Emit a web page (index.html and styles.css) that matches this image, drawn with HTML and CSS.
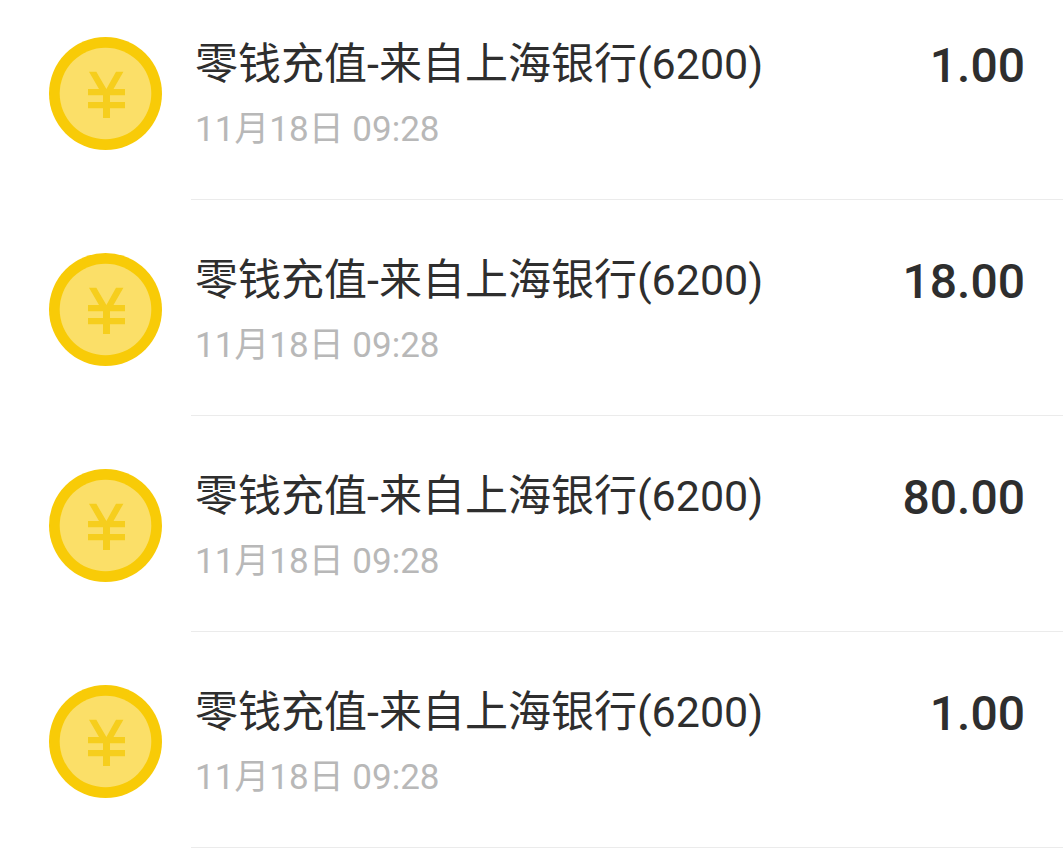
FILE: index.html
```html
<!DOCTYPE html>
<html lang="zh-CN">
<head>
  <meta charset="UTF-8">
  <meta name="viewport" content="width=device-width, initial-scale=1.0">
  <title>零钱明细</title>
  <link rel="stylesheet" href="styles.css">
</head>
<body>
  <svg class="symbols" aria-hidden="true">
    <symbol id="coin" viewBox="0 0 113 113">
      <circle cx="56.5" cy="56.5" r="56.5" fill="#f8cb07"/>
      <circle cx="56.5" cy="56.5" r="45.8" fill="#fbdf68"/>
      <path d="M40 34.7H47.3L57.4 52 67 34.7H74.4L64.5 52H76V58.3H61V65H76V71.2H61V81H54V71.2H39V65H54V58.3H39V52H50Z" fill="#f6ce1d"/>
    </symbol>
  </svg>

  <ul class="bill-list">
    <li class="bill">
      <svg class="bill-icon" aria-hidden="true"><use href="#coin"/></svg>
      <div class="bill-body">
        <div class="bill-info">
          <div class="bill-title">零钱充值-来自上海银行(6200)</div>
          <div class="bill-time">11月18日 09:28</div>
        </div>
        <div class="bill-amount">1.00</div>
      </div>
    </li>
    <li class="bill">
      <svg class="bill-icon" aria-hidden="true"><use href="#coin"/></svg>
      <div class="bill-body">
        <div class="bill-info">
          <div class="bill-title">零钱充值-来自上海银行(6200)</div>
          <div class="bill-time">11月18日 09:28</div>
        </div>
        <div class="bill-amount">18.00</div>
      </div>
    </li>
    <li class="bill">
      <svg class="bill-icon" aria-hidden="true"><use href="#coin"/></svg>
      <div class="bill-body">
        <div class="bill-info">
          <div class="bill-title">零钱充值-来自上海银行(6200)</div>
          <div class="bill-time">11月18日 09:28</div>
        </div>
        <div class="bill-amount">80.00</div>
      </div>
    </li>
    <li class="bill">
      <svg class="bill-icon" aria-hidden="true"><use href="#coin"/></svg>
      <div class="bill-body">
        <div class="bill-info">
          <div class="bill-title">零钱充值-来自上海银行(6200)</div>
          <div class="bill-time">11月18日 09:28</div>
        </div>
        <div class="bill-amount">1.00</div>
      </div>
    </li>
  </ul>
</body>
</html>
```
FILE: styles.css
```css
body {
  margin: 0;
  background-color: #fff;
  color: #2e2e2e;
  font-family: Roboto, "Noto Sans CJK SC", sans-serif;
}

.symbols {
  display: none;
}

.bill-list {
  list-style: none;
  margin: 0;
  padding: 0;
}

.bill {
  display: flex;
  padding-left: 49px;
}

.bill + .bill {
  padding-top: 16px;
}

.bill-icon {
  flex: none;
  width: 113px;
  height: 113px;
  margin: 37px 29px 0 0;
}

.bill-body {
  flex: 1;
  display: flex;
  justify-content: space-between;
  padding: 34px 38px 45px 4px;
  border-bottom: 1px solid #ebebeb;
}

.bill-title {
  font-size: 43px;
  line-height: 60px;
}

.bill-time {
  margin-top: 12px;
  color: #b8b8b8;
  font-size: 35px;
  line-height: 48px;
}

.bill-amount {
  font-size: 48px;
  font-weight: 500;
  line-height: 64px;
}
```
